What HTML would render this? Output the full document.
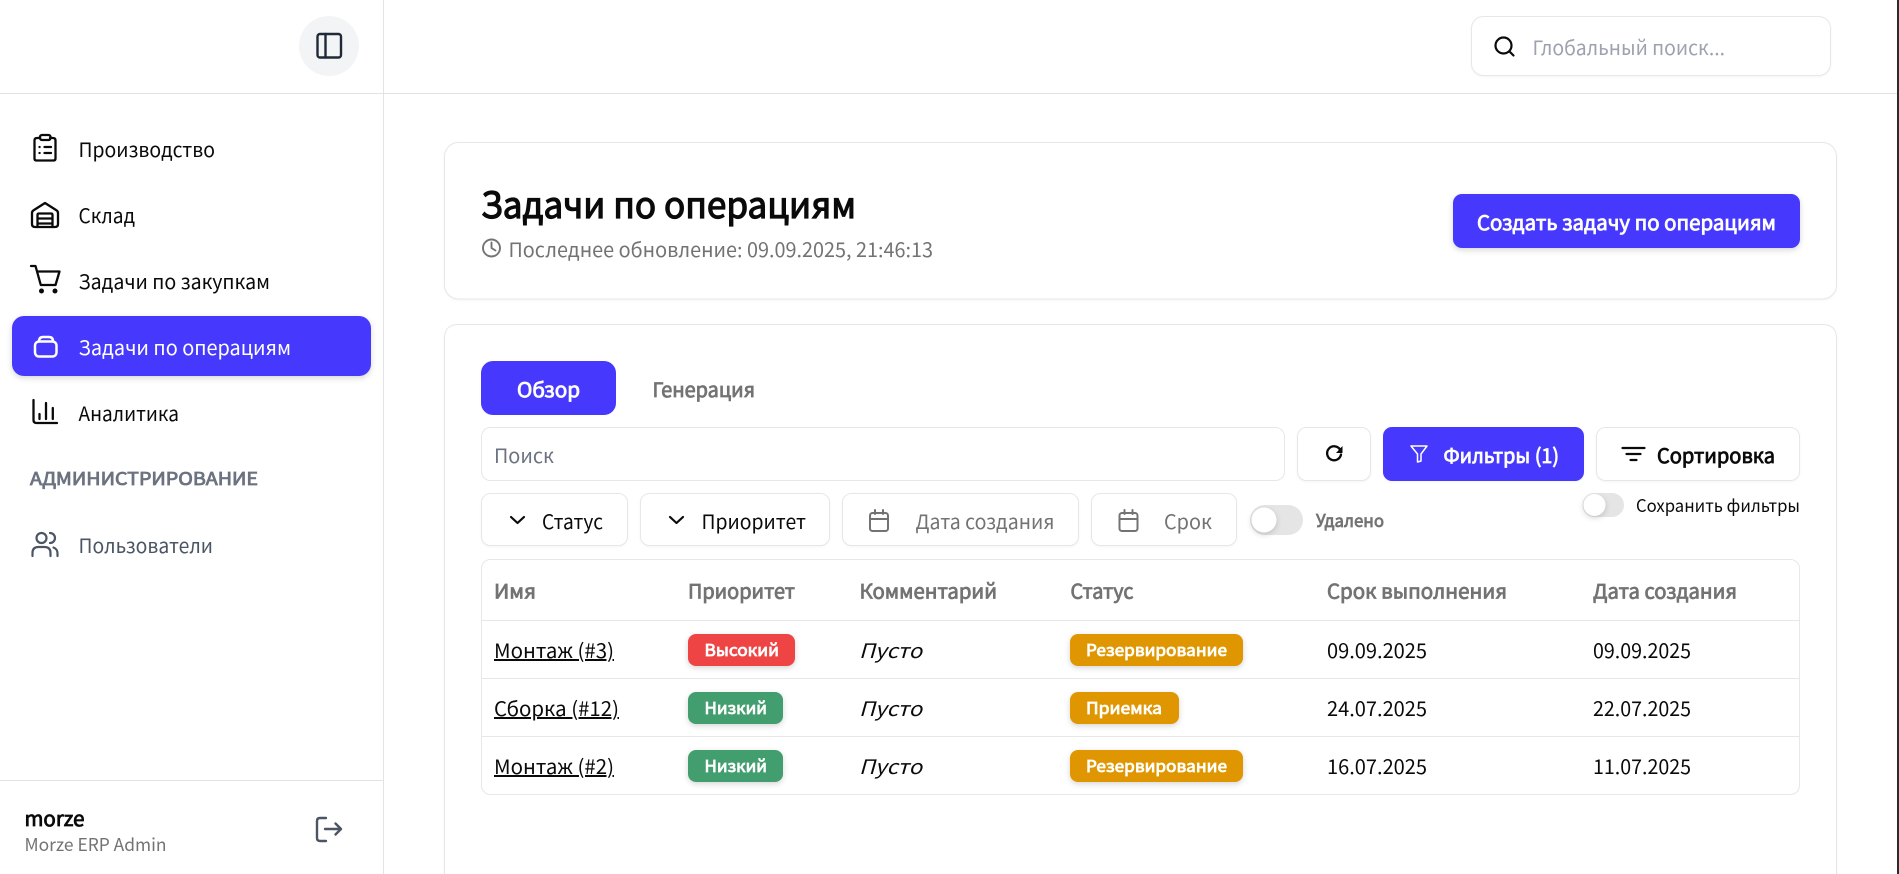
<!DOCTYPE html>
<html lang="ru">
<head>
<meta charset="utf-8">
<title>Задачи по операциям</title>
<style>
html,body{margin:0;padding:0;background:#fff;width:1899px;height:874px;overflow:hidden}
svg{display:block}
text{font-family:"Noto Sans CJK SC","Liberation Sans",sans-serif;font-size:20px;fill:#0a0a0a;white-space:pre}
.s{stroke-width:.8px;stroke:currentColor;paint-order:stroke}
.g{fill:#737373;color:#737373}
.w{fill:#fff;color:#fff}
.k{color:#0a0a0a}
.box{fill:#fff;stroke:#e7e7e7;stroke-width:1}
.ln{fill:none;stroke-linecap:round;stroke-linejoin:round}
.sh{filter:drop-shadow(0 1px 1px rgba(0,0,0,.04))}
.sh2{filter:drop-shadow(0 2px 3px rgba(0,0,0,.16))}
</style>
</head>
<body>
<svg width="1899" height="874" viewBox="0 0 1899 874" xmlns="http://www.w3.org/2000/svg">
<rect width="1899" height="874" fill="#fff"/>
<!-- window edge -->
<rect x="1897" y="0" width="2" height="874" fill="#2b2b2b"/>

<!-- layout lines -->
<rect x="383" y="0" width="1" height="874" fill="#e3e3e3"/>
<rect x="0" y="93" width="1897" height="1" fill="#e3e3e3"/>
<rect x="0" y="780" width="383" height="1" fill="#e3e3e3"/>

<!-- sidebar toggle -->
<circle cx="329" cy="46" r="30" fill="#f3f4f6"/>
<g class="ln" stroke="#1f2937" stroke-width="2.400"><rect x="317.500" y="34" width="23.500" height="23.500" rx="2.500"/><path d="M325.500 34V57.500"/></g>

<!-- nav icons -->
<g class="ln" stroke="#0a0a0a" stroke-width="2.300">
  <path d="M40 138h-3q-2.500 0-2.500 2.500v18q0 2 2 2h17q2 0 2-2v-18q0-2.500-2.500-2.500h-3"/>
  <rect x="40" y="135" width="10.500" height="5" rx="2"/>
  <path d="M39.500 147h.1M39.500 153h.1M44.500 147h6.500M44.500 153h6.500"/>
</g>
<g class="ln" stroke="#0a0a0a" stroke-width="2.300">
  <path d="M32 213q0-2 2-3l11-7 11 7q2 1 2 3v11q0 3-3 3H35q-3 0-3-3z"/>
  <path d="M37.500 227v-12q0-1.500 1.500-1.500h12q1.500 0 1.500 1.500v12M37.500 218.500h15M37.500 223.500h15"/>
</g>
<g class="ln" stroke="#0a0a0a" stroke-width="2.300">
  <path d="M31 266h4.500l5.300 19h14.700l4-13.500H37"/>
</g>
<circle cx="41.500" cy="291" r="2.500" fill="#0a0a0a"/><circle cx="55" cy="291" r="2.500" fill="#0a0a0a"/>

<!-- active item -->
<rect class="sh2" x="12" y="316" width="359" height="60" rx="12" fill="#4639fd"/>
<g class="ln" stroke="#fff" stroke-width="2.500">
  <rect x="35" y="341.500" width="21.500" height="15" rx="4"/>
  <path d="M39 341.500q0-4.500 4-4.500h6q4 0 4 4.500"/>
</g>

<g class="ln" stroke="#0a0a0a" stroke-width="2.300">
  <path d="M33.500 400v20q0 3 3 3H57"/>
  <path d="M39.500 414v5M46 403v16M52.800 408v11"/>
</g>
<g class="ln" stroke="#4b5563" stroke-width="2.200">
  <circle cx="41.500" cy="538" r="5"/>
  <path d="M32.500 556v-3q0-6 6-6h6q6 0 6 6v3M50 533a5 5 0 0 1 0 10M53.500 547.500q4 1.500 4 6v2.500"/>
</g>

<!-- nav text -->
<text x="78.500" y="157" textLength="136.500" lengthAdjust="spacingAndGlyphs">Производство</text>
<text x="78.500" y="223" textLength="56.500" lengthAdjust="spacingAndGlyphs">Склад</text>
<text x="78.500" y="289" textLength="191.500" lengthAdjust="spacingAndGlyphs">Задачи по закупкам</text>
<text x="78.500" y="355" textLength="212.500" lengthAdjust="spacingAndGlyphs" class="w">Задачи по операциям</text>
<text x="78.500" y="421" textLength="100.500" lengthAdjust="spacingAndGlyphs">Аналитика</text>
<text x="30" y="485" textLength="228" lengthAdjust="spacingAndGlyphs" class="s" style="font-size:17.500px;fill:#6b7280;color:#6b7280">АДМИНИСТРИРОВАНИЕ</text>
<text x="78.500" y="553" textLength="134.500" lengthAdjust="spacingAndGlyphs" style="fill:#4b5563">Пользователи</text>

<!-- user -->
<text x="24.500" y="826" textLength="60" lengthAdjust="spacingAndGlyphs" class="s k">morze</text>
<text x="24.500" y="851" textLength="142" lengthAdjust="spacingAndGlyphs" style="font-size:17.500px;fill:#737373">Morze ERP Admin</text>
<g class="ln" stroke="#4b5563" stroke-width="2.400"><path d="M326 818h-6q-3 0-3 3v17q0 3 3 3h6M325 829h16M335.500 823.500l5.500 5.500-5.500 5.500"/></g>

<!-- global search -->
<rect class="box sh" x="1471.500" y="16.500" width="359" height="59" rx="12"/>
<g class="ln" stroke="#0a0a0a" stroke-width="2.200"><circle cx="1503.500" cy="45.500" r="8"/><path d="M1509.500 51.500l4 4"/></g>
<text x="1532.500" y="55" textLength="192.500" lengthAdjust="spacingAndGlyphs" style="fill:#9ca3af">Глобальный поиск...</text>

<!-- header card -->
<rect class="box sh" x="444.500" y="142.500" width="1392" height="156.500" rx="14"/>
<text x="481" y="218" textLength="375" lengthAdjust="spacingAndGlyphs" class="s k" style="font-size:36px;stroke-width:1.200px">Задачи по операциям</text>
<g class="ln" stroke="#737373" stroke-width="1.900"><circle cx="491.500" cy="248" r="8.500"/><path d="M491.500 242.500v5.500l4 2.500"/></g>
<text x="508.500" y="257" textLength="424.500" lengthAdjust="spacingAndGlyphs" class="g">Последнее обновление: 09.09.2025, 21:46:13</text>
<rect class="sh2" x="1453" y="194" width="347" height="54" rx="9" fill="#4639fd"/>
<text x="1477" y="230" textLength="299" lengthAdjust="spacingAndGlyphs" class="s w">Создать задачу по операциям</text>

<!-- main card -->
<path class="box sh" d="M444.500 874V338.500q0-14 14-14H1822.500q14 0 14 14V874"/>

<!-- tabs -->
<rect x="481" y="361" width="135" height="54" rx="12" fill="#4639fd"/>
<text x="517" y="397" textLength="63" lengthAdjust="spacingAndGlyphs" class="s w">Обзор</text>
<text x="652.500" y="397" textLength="102.500" lengthAdjust="spacingAndGlyphs" class="s g">Генерация</text>

<!-- toolbar -->
<rect class="box" x="481.500" y="427.500" width="803" height="53" rx="9"/>
<text x="494" y="463" textLength="60" lengthAdjust="spacingAndGlyphs" style="fill:#6b7280">Поиск</text>
<rect class="box sh" x="1297.500" y="427.500" width="73" height="53" rx="9"/>
<g class="ln" stroke="#0a0a0a" stroke-width="2.300"><path d="M1340 449.500a7 7 0 1 0 1 5"/></g>
<path d="M1342.500 446v7h-6.500z" fill="#0a0a0a"/>
<rect class="sh" x="1383" y="427" width="201" height="54" rx="9" fill="#4639fd"/>
<g class="ln" stroke="#fff" stroke-width="1.500"><path d="M1411 446h16l-6 8v7l-3.500 1v-8z"/></g>
<text x="1443.500" y="463" textLength="115.500" lengthAdjust="spacingAndGlyphs" class="s w">Фильтры (1)</text>
<rect class="box sh" x="1596.500" y="427.500" width="203" height="53" rx="9"/>
<g class="ln" stroke="#0a0a0a" stroke-width="2.200"><path d="M1622.500 448h22M1626.500 454h14M1630.500 460h6"/></g>
<text x="1657" y="463" textLength="118" lengthAdjust="spacingAndGlyphs" class="s k">Сортировка</text>

<!-- save filter switch -->
<rect x="1582.500" y="493" width="41.500" height="24" rx="12" fill="#e5e5e5"/>
<circle class="sh2" cx="1594.500" cy="505" r="11" fill="#fff"/>
<text x="1636" y="512" textLength="164" lengthAdjust="spacingAndGlyphs" style="font-size:17.500px">Сохранить фильтры</text>

<!-- filter row -->
<rect class="box sh" x="481.500" y="493.500" width="146" height="52" rx="9"/>
<path class="ln" stroke="#0a0a0a" stroke-width="2.200" d="M511 517l6.500 6 6.500-6"/>
<text x="542" y="529" textLength="61" lengthAdjust="spacingAndGlyphs">Статус</text>
<rect class="box sh" x="640.500" y="493.500" width="189" height="52" rx="9"/>
<path class="ln" stroke="#0a0a0a" stroke-width="2.200" d="M670 517l6.500 6 6.500-6"/>
<text x="701.500" y="529" textLength="104.500" lengthAdjust="spacingAndGlyphs">Приоритет</text>
<rect class="box sh" x="842.500" y="493.500" width="236" height="52" rx="9"/>
<g class="ln" stroke="#737373" stroke-width="2"><rect x="870" y="513" width="18" height="18" rx="2.500"/><path d="M870 519h18M875 510v4M883 510v4"/></g>
<text x="915.500" y="529" textLength="139" lengthAdjust="spacingAndGlyphs" class="g">Дата создания</text>
<rect class="box sh" x="1091.500" y="493.500" width="145" height="52" rx="9"/>
<g class="ln" stroke="#737373" stroke-width="2"><rect x="1119.500" y="513" width="18" height="18" rx="2.500"/><path d="M1119.500 519h18M1124.500 510v4M1132.500 510v4"/></g>
<text x="1164" y="529" textLength="48" lengthAdjust="spacingAndGlyphs" class="g">Срок</text>

<!-- deleted switch -->
<rect x="1250" y="505" width="53" height="30" rx="15" fill="#e5e5e5"/>
<circle class="sh2" cx="1264" cy="520" r="12.500" fill="#fff"/>
<text x="1316" y="527" textLength="68" lengthAdjust="spacingAndGlyphs" class="s g" style="font-size:17.500px">Удалено</text>

<!-- table -->
<rect class="box" x="481.500" y="559.500" width="1318" height="235" rx="9"/>
<rect x="482" y="620" width="1317" height="1" fill="#e7e7e7"/>
<rect x="482" y="678" width="1317" height="1" fill="#e7e7e7"/>
<rect x="482" y="736" width="1317" height="1" fill="#e7e7e7"/>

<text x="494" y="598.500" textLength="42" lengthAdjust="spacingAndGlyphs" class="s g">Имя</text>
<text x="688" y="598.500" textLength="107" lengthAdjust="spacingAndGlyphs" class="s g">Приоритет</text>
<text x="859.500" y="598.500" textLength="137.500" lengthAdjust="spacingAndGlyphs" class="s g">Комментарий</text>
<text x="1070.500" y="598.500" textLength="63" lengthAdjust="spacingAndGlyphs" class="s g">Статус</text>
<text x="1327" y="598.500" textLength="180" lengthAdjust="spacingAndGlyphs" class="s g">Срок выполнения</text>
<text x="1593" y="598.500" textLength="144" lengthAdjust="spacingAndGlyphs" class="s g">Дата создания</text>

<!-- row 1 -->
<text x="494" y="658" textLength="120" lengthAdjust="spacingAndGlyphs" style="text-decoration:underline">Монтаж (#3)</text>
<rect class="sh2" x="688" y="634" width="107" height="32" rx="8" fill="#ef4444"/>
<text x="704.500" y="656" textLength="74.500" lengthAdjust="spacingAndGlyphs" class="s w" style="font-size:16.500px">Высокий</text>
<text x="859" y="658" textLength="63" lengthAdjust="spacingAndGlyphs" font-style="italic">Пусто</text>
<rect class="sh2" x="1070" y="634" width="173" height="32" rx="8" fill="#e09600"/>
<text x="1086" y="656" textLength="141" lengthAdjust="spacingAndGlyphs" class="s w" style="font-size:16.500px">Резервирование</text>
<text x="1327" y="658" textLength="100" lengthAdjust="spacingAndGlyphs">09.09.2025</text>
<text x="1593" y="658" textLength="98" lengthAdjust="spacingAndGlyphs">09.09.2025</text>

<!-- row 2 -->
<text x="494" y="716" textLength="125" lengthAdjust="spacingAndGlyphs" style="text-decoration:underline">Сборка (#12)</text>
<rect class="sh2" x="688" y="692" width="95" height="32" rx="8" fill="#429e6e"/>
<text x="704.500" y="714" textLength="62.500" lengthAdjust="spacingAndGlyphs" class="s w" style="font-size:16.500px">Низкий</text>
<text x="859" y="716" textLength="63" lengthAdjust="spacingAndGlyphs" font-style="italic">Пусто</text>
<rect class="sh2" x="1070" y="692" width="109" height="32" rx="8" fill="#e09600"/>
<text x="1086" y="714" textLength="76" lengthAdjust="spacingAndGlyphs" class="s w" style="font-size:16.500px">Приемка</text>
<text x="1327" y="716" textLength="100" lengthAdjust="spacingAndGlyphs">24.07.2025</text>
<text x="1593" y="716" textLength="98" lengthAdjust="spacingAndGlyphs">22.07.2025</text>

<!-- row 3 -->
<text x="494" y="774" textLength="120" lengthAdjust="spacingAndGlyphs" style="text-decoration:underline">Монтаж (#2)</text>
<rect class="sh2" x="688" y="750" width="95" height="32" rx="8" fill="#429e6e"/>
<text x="704.500" y="772" textLength="62.500" lengthAdjust="spacingAndGlyphs" class="s w" style="font-size:16.500px">Низкий</text>
<text x="859" y="774" textLength="63" lengthAdjust="spacingAndGlyphs" font-style="italic">Пусто</text>
<rect class="sh2" x="1070" y="750" width="173" height="32" rx="8" fill="#e09600"/>
<text x="1086" y="772" textLength="141" lengthAdjust="spacingAndGlyphs" class="s w" style="font-size:16.500px">Резервирование</text>
<text x="1327" y="774" textLength="100" lengthAdjust="spacingAndGlyphs">16.07.2025</text>
<text x="1593" y="774" textLength="98" lengthAdjust="spacingAndGlyphs">11.07.2025</text>
</svg>
</body>
</html>
